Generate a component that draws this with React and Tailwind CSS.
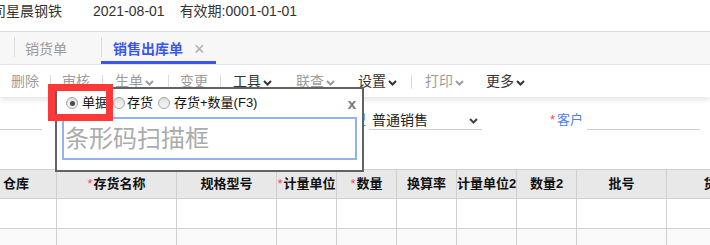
const FONT = { fontFamily: '"Liberation Sans", "Noto Sans CJK SC", sans-serif' };

function Chevron({ color = "#333" }) {
  return (
    <svg width="9" height="6" viewBox="0 0 9 6" className="ml-[2px] mt-[2px]">
      <polyline points="1,1 4.5,4.5 8,1" fill="none" stroke={color} strokeWidth="2" />
    </svg>
  );
}

function Sep({ cls }) {
  return <span className={`w-px h-[14px] bg-[#dcdcdc] ${cls}`} />;
}

function ToolItem({ label, dim, chevron, cls }) {
  const color = dim ? "#9c9c9c" : "#333";
  return (
    <span className={`flex items-center ${cls}`} style={{ color }}>
      {label}
      {chevron && <Chevron color={color} />}
    </span>
  );
}

function Radio({ checked }) {
  return (
    <span className="w-[12px] h-[12px] rounded-full border border-[#a2a2a2] bg-gradient-to-b from-[#dedede] to-[#f8f8f8] flex items-center justify-center">
      {checked && <span className="w-[5px] h-[5px] rounded-full bg-[#4a4a4a]" />}
    </span>
  );
}

const columns = [
  { w: "w-[57px]", label: "仓库", align: "justify-start pl-[3px]" },
  { w: "w-[120px]", label: "存货名称", req: true },
  { w: "w-[100px]", label: "规格型号" },
  { w: "w-[60px]", label: "计量单位", req: true },
  { w: "w-[60px]", label: "数量", req: true },
  { w: "w-[60px]", label: "换算率" },
  { w: "w-[60px]", label: "计量单位2" },
  { w: "w-[60px]", label: "数量2" },
  { w: "w-[90px]", label: "批号" },
  { w: "w-[100px]", label: "货位" },
];

export default function App() {
  return (
    <div className="relative w-[710px] h-[245px] overflow-hidden bg-white text-[#333]" style={FONT}>
      {/* 顶部信息 */}
      <div className="h-[32px] border-b border-[#dcdcdc] flex items-start pt-[1px] text-[14px] leading-[20px]">
        <span className="ml-[-8px]">司星晨钢铁</span>
        <span className="ml-[31px]">2021-08-01</span>
        <span className="ml-[15px]">有效期:0001-01-01</span>
      </div>

      {/* 页签 */}
      <div className="h-[33px] bg-[#f7f7f7] border-b border-[#e2e5ef] flex text-[14px]">
        <div className="ml-[14px] w-[87px] flex flex-col">
          <div className="mt-[5px] h-[20px] border-l border-[#dcdcdc] pl-[10px] flex items-center pt-[4px] text-[#9a9a9a]">
            销货单
          </div>
        </div>
        <div className="w-[115px] flex flex-col justify-between border-b-[3px] border-[#3b56ee]">
          <div className="mt-[5px] h-[20px] border-l border-[#dcdcdc] pl-[11px] flex items-center pt-[4px]">
            <span className="font-bold text-[#3b56ee]">销售出库单</span>
            <span className="ml-[11px] text-[#aaa] text-[18px] font-light leading-none">×</span>
          </div>
        </div>
      </div>

      {/* 工具栏 */}
      <div className="relative z-10 h-[32px] bg-white shadow-[0_3px_5px_rgba(0,0,0,0.10)] flex items-center text-[14px] pt-[1px]">
        <ToolItem label="删除" dim cls="ml-[11px]" />
        <Sep cls="ml-[11px]" />
        <ToolItem label="审核" dim cls="ml-[11px]" />
        <Sep cls="ml-[12px]" />
        <ToolItem label="生单" dim chevron cls="ml-[12px]" />
        <Sep cls="ml-[14px]" />
        <ToolItem label="变更" dim cls="ml-[11px]" />
        <Sep cls="ml-[12px]" />
        <ToolItem label="工具" chevron cls="ml-[12px]" />
        <ToolItem label="联查" dim chevron cls="ml-[24px]" />
        <ToolItem label="设置" chevron cls="ml-[23px]" />
        <Sep cls="ml-[14px]" />
        <ToolItem label="打印" dim chevron cls="ml-[13px]" />
        <ToolItem label="更多" chevron cls="ml-[22px]" />
      </div>

      {/* 表头字段 */}
      <div className="h-[72px] flex items-end pb-[39px] text-[14px]">
        <div className="w-[42px] h-[20px] border-b border-[#cfcfcf]" />
        <div className="ml-[268px] w-[56px] text-right text-[#4b82ee] leading-[20px] h-[20px]">业务类型</div>
        <div className="ml-[3px] w-[113px] h-[20px] border-b border-[#cfcfcf] flex items-center justify-between pl-[3px] pr-[4px] leading-[20px]">
          <span className="text-[#222]">普通销售</span>
          <Chevron color="#444" />
        </div>
        <span className="ml-[68px] h-[20px] text-[#f04a5a] text-[13px] leading-[20px]">*</span>
        <span className="ml-[2px] h-[20px] text-[#4b82ee] text-[13px] leading-[20px]">客户</span>
        <div className="ml-[4px] w-[113px] h-[20px] border-b border-[#cfcfcf]" />
      </div>

      {/* 表格 */}
      <div className="border-t border-[#d2d2d2] w-[767px]">
        <div className="flex bg-[#e8e8e8] text-[13px] font-bold text-[#111]">
          {columns.map((c) => (
            <div
              key={c.label}
              className={`${c.w} h-[29px] shrink-0 border-r border-b border-[#d0d0d0] flex items-center whitespace-nowrap ${c.align || "justify-center"}`}
            >
              {c.req && <span className="text-[#f04a5a] font-normal mr-[1px]">*</span>}
              {c.label}
            </div>
          ))}
        </div>
        {["bg-white", "bg-[#fafafa]"].map((bg, r) => (
          <div key={r} className={`flex ${bg}`}>
            {columns.map((c) => (
              <div key={c.label} className={`${c.w} h-[30px] shrink-0 border-r border-b border-[#d0d0d0]`} />
            ))}
          </div>
        ))}
      </div>

      {/* 扫描弹窗 */}
      <div className="absolute left-[55px] top-[87px] w-[309px] h-[85px] border-2 border-[#626262] bg-white z-20 text-[13px] text-[#111]">
        <div className="mt-[6px] h-[16px] flex items-center pl-[9px] pr-[6px]">
          <Radio checked />
          <span className="ml-[4px]">单据</span>
          <span className="ml-[5px]"><Radio /></span>
          <span className="ml-[2px]">存货</span>
          <span className="ml-[5px]"><Radio /></span>
          <span className="ml-[4px]">存货+数量(F3)</span>
          <span className="ml-auto text-[#6e7886] font-bold text-[15px] leading-none">x</span>
        </div>
        <div className="mx-[5px] mt-[6px] h-[43px] border-2 border-[#8fb3ee] flex items-center pl-[1px]">
          <span className="text-[24px] text-[#ababab] leading-none">条形码扫描框</span>
        </div>
      </div>

      {/* 红色标注框 */}
      <div className="absolute left-[48px] top-[84px] w-[65px] h-[37px] border-[7px] border-[#fd3838] z-30" />
    </div>
  );
}
